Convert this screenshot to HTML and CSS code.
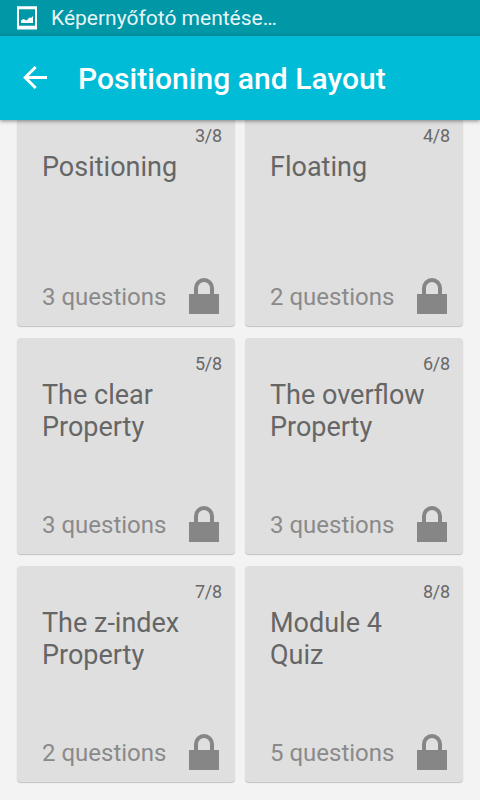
FILE: index.html
```
<!DOCTYPE html>
<html lang="hu">
<head>
<meta charset="utf-8">
<title>Positioning and Layout</title>
<link rel="stylesheet" href="styles.css">
</head>
<body>
<svg width="0" height="0" class="defs"><symbol id="lock" viewBox="0 0 30 36"><path d="M0 16h30v20H0z"/><path d="M7 17V10a8 8 0 0 1 16 0v7" fill="none" stroke="#868686" stroke-width="4"/></symbol></svg>
<div class="status"><svg class="shot" viewBox="0 0 20 24"><path fill="#fff" fill-rule="evenodd" d="M0 .3h20v23.200H0zM2 3.300v16.500h16V3.300z"/><path fill="#fff" d="M4 17v-2.500l2.500-1.500 3 1.500 3-3 1.500 .5 2-2V17z"/></svg><span>Képernyőfotó mentése…</span></div>
<header class="bar"><svg class="back" viewBox="0 0 26 26"><path d="M25 12.500H3M13.700 2L3.200 12.500l10.500 10.500" fill="none" stroke="#fff" stroke-width="3"/></svg><h1>Positioning and Layout</h1></header>
<main class="grid">
<section class="card"><span class="num">3/8</span><h2>Positioning</h2><footer><span>3 questions</span><svg class="lock"><use href="#lock"/></svg></footer></section>
<section class="card"><span class="num">4/8</span><h2>Floating</h2><footer><span>2 questions</span><svg class="lock"><use href="#lock"/></svg></footer></section>
<section class="card"><span class="num">5/8</span><h2>The clear Property</h2><footer><span>3 questions</span><svg class="lock"><use href="#lock"/></svg></footer></section>
<section class="card"><span class="num">6/8</span><h2>The overflow Property</h2><footer><span>3 questions</span><svg class="lock"><use href="#lock"/></svg></footer></section>
<section class="card"><span class="num">7/8</span><h2>The z-index Property</h2><footer><span>2 questions</span><svg class="lock"><use href="#lock"/></svg></footer></section>
<section class="card"><span class="num">8/8</span><h2>Module 4<br>Quiz</h2><footer><span>5 questions</span><svg class="lock"><use href="#lock"/></svg></footer></section>
</main>
</body>
</html>
```
FILE: styles.css
```
* { box-sizing: border-box; }
body { margin: 0; height: 800px; overflow: hidden; background: #f3f3f3; font-family: Roboto, sans-serif; display: flex; flex-direction: column; }
.defs { position: absolute; }
.status { flex: none; height: 36px; background: #0097a7; color: #e6f5f6; display: flex; align-items: center; padding-left: 17px; gap: 14px; font-size: 21px; }
.shot { width: 20px; height: 24px; }
.bar { flex: none; height: 84px; background: #00bcd7; color: #fff; display: flex; align-items: center; padding-left: 22px; gap: 30px; box-shadow: 0 1px 4px rgba(0,0,0,.45); z-index: 1; }
.back { width: 26px; height: 26px; }
h1 { margin: 0; font-size: 30px; font-weight: 500; letter-spacing: .05px; }
.grid { flex: 1; min-height: 0; display: grid; grid-template-columns: 218px 218px; grid-auto-rows: 216px; gap: 12px 10px; padding: 0 17px; margin-top: -10px; }
.card { background: #dfdfdf; border-radius: 4px; box-shadow: 0 1px 1px rgba(0,0,0,.2); padding: 16px 13px 12px 25px; display: flex; flex-direction: column; }
.num { align-self: flex-end; font-size: 18px; line-height: 20px; letter-spacing: -.2px; color: #686868; }
h2 { margin: 5px 0 0; font-size: 27px; line-height: 32px; font-weight: 400; color: #666; }
footer { margin-top: auto; display: flex; justify-content: space-between; align-items: flex-end; color: #8a8a8a; font-size: 24px; line-height: 34px; padding-right: 3px; }
.lock { width: 30px; height: 36px; fill: #868686; }
```
